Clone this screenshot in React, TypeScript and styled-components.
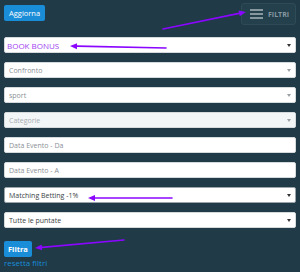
import { createGlobalStyle, styled } from "styled-components";

const GlobalStyle = createGlobalStyle`
    html, body {
        margin: 0;
        padding: 0;
        background: #203a47;
    }
    body {
        font-family: "Open Sans", "Liberation Sans", sans-serif;
    }
`

const Page = styled.div`
    position: relative;
    width: 300px;
    height: 272px;
    box-sizing: border-box;
    padding: 3px 4px 0 4px;
    background: #203a47;
    overflow: hidden;
`

const Header = styled.div`
    display: flex;
    justify-content: space-between;
    align-items: flex-start;
    height: 22px;
    margin-bottom: 12px;
`

const Button = styled.button<{ $bold?: boolean }>`
    display: flex;
    align-items: center;
    height: 16px;
    margin-top: 2px;
    padding: 0 ${(p) => (p.$bold ? 4 : 5)}px;
    border: none;
    border-radius: 2px;
    background: #1a8dd8;
    color: #fff;
    font-family: "Open Sans", "Liberation Sans", sans-serif;
    font-size: 7.5px;
    font-weight: ${(p) => (p.$bold ? 700 : 400)};
    cursor: pointer;
`

const ToggleButton = styled.button`
    display: flex;
    align-items: center;
    gap: 5px;
    height: 22px;
    width: 55px;
    box-sizing: border-box;
    padding: 0 0 0 8px;
    background: #24404d;
    border: 1px solid #2f4b58;
    border-radius: 3px;
    color: #8797a0;
    font-family: "Open Sans", "Liberation Sans", sans-serif;
    font-size: 7px;
    font-weight: 700;
`

const Burger = styled.span`
    display: flex;
    flex-direction: column;
    gap: 2.5px;
    span {
        display: block;
        width: 13px;
        height: 1.5px;
        background: #8797a0;
    }
`

const Fields = styled.div`
    display: flex;
    flex-direction: column;
    gap: 9px;
`

const Field = styled.div<{ $tone?: "value" | "placeholder" | "disabled" | "accent"; $focus?: boolean }>`
    display: flex;
    align-items: center;
    justify-content: space-between;
    height: 16px;
    box-sizing: border-box;
    padding: 0 4px 0 ${(p) => (p.$tone === "accent" ? 2 : 4)}px;
    border-radius: 2px;
    border: 1px solid ${(p) => (p.$focus ? "#9aa4aa" : "#d5dadd")};
    background: ${(p) => (p.$tone === "disabled" ? "#f3f6f7" : "#fff")};
    font-size: ${(p) => (p.$tone === "accent" ? 8 : 7)}px;
    color: ${(p) =>
        p.$tone === "accent" ? "#a03ff0" :
        p.$tone === "value" ? "#3a3f44" :
        p.$tone === "disabled" ? "#a6adb2" : "#8a9096"};
`

const Caret = styled.span<{ $faded?: boolean }>`
    width: 0;
    height: 0;
    border-left: 2.5px solid transparent;
    border-right: 2.5px solid transparent;
    border-top: 3px solid ${(p) => (p.$faded ? "#9aa0a5" : "#333")};
`

const Footer = styled.div`
    display: flex;
    flex-direction: column;
    align-items: flex-start;
    margin-top: 11px;
`

const ResetLink = styled.a`
    margin-top: 0;
    color: #1a8dd8;
    font-size: 8px;
    text-decoration: none;
`

const Overlay = styled.svg`
    position: absolute;
    left: 0;
    top: 0;
    pointer-events: none;
`

const arrows = [
    { x1: 163, y1: 29, x2: 246, y2: 12 },
    { x1: 166, y1: 48, x2: 70, y2: 46 },
    { x1: 172, y1: 198, x2: 88, y2: 198 },
    { x1: 124, y1: 240, x2: 35, y2: 248 },
];

const Arrow = ({ x1, y1, x2, y2 }: { x1: number; y1: number; x2: number; y2: number }) => {
    const a = Math.atan2(y2 - y1, x2 - x1);
    const len = 7;
    const w = 3;
    const bx = x2 - Math.cos(a) * len;
    const by = y2 - Math.sin(a) * len;
    const px = -Math.sin(a) * w;
    const py = Math.cos(a) * w;
    return (
        <g>
            <line x1={x1} y1={y1} x2={bx} y2={by} stroke="#8a06ff" strokeWidth={1.6} strokeLinecap="round" />
            <polygon points={`${x2},${y2} ${bx + px},${by + py} ${bx - px},${by - py}`} fill="#8a06ff" />
        </g>
    );
};

const App = () => {
    return (
        <>
            <GlobalStyle />
            <Page>
                <Header>
                    <Button>Aggiorna</Button>
                    <ToggleButton>
                        <Burger><span /><span /><span /></Burger>
                        FILTRI
                    </ToggleButton>
                </Header>
                <Fields>
                    <Field $tone="accent">BOOK BONUS<Caret /></Field>
                    <Field>Confronto<Caret $faded /></Field>
                    <Field>sport<Caret $faded /></Field>
                    <Field $tone="disabled">Categorie<Caret $faded /></Field>
                    <Field>Data Evento - Da</Field>
                    <Field>Data Evento - A</Field>
                    <Field $tone="value" $focus>Matching Betting -1%<Caret /></Field>
                    <Field $tone="value">Tutte le puntate<Caret /></Field>
                </Fields>
                <Footer>
                    <Button $bold>Filtra</Button>
                    <ResetLink href="#">resetta filtri</ResetLink>
                </Footer>
                <Overlay width={300} height={272} viewBox="0 0 300 272">
                    {arrows.map((ar, i) => <Arrow key={i} {...ar} />)}
                </Overlay>
            </Page>
        </>
    );
}

export default App;
